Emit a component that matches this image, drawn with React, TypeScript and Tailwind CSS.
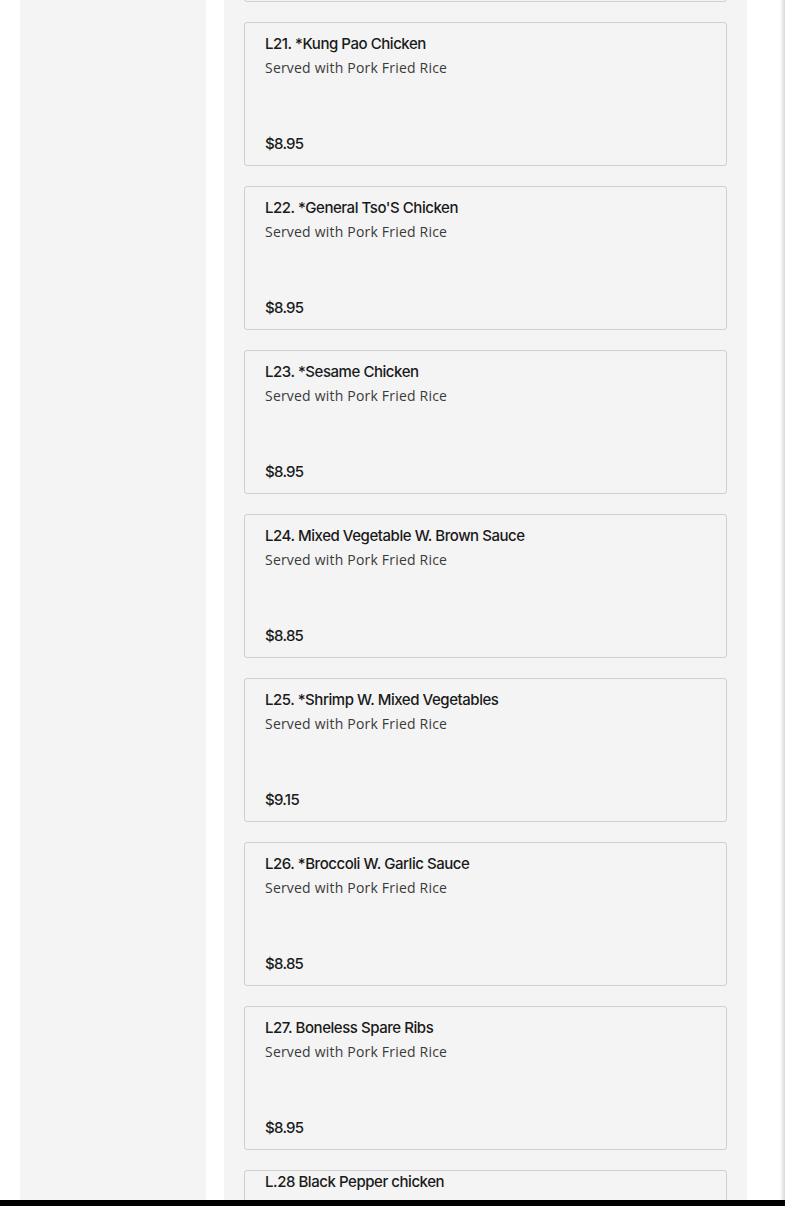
import React from 'react';

type Item = { name: string; price: string };

const items: Item[] = [
    { name: 'L21. *Kung Pao Chicken', price: '$8.95' },
    { name: "L22. *General Tso'S Chicken", price: '$8.95' },
    { name: 'L23. *Sesame Chicken', price: '$8.95' },
    { name: 'L24. Mixed Vegetable W. Brown Sauce', price: '$8.85' },
    { name: 'L25. *Shrimp W. Mixed Vegetables', price: '$9.15' },
    { name: 'L26. *Broccoli W. Garlic Sauce', price: '$8.85' },
    { name: 'L27. Boneless Spare Ribs', price: '$8.95' },
];

const MenuCard: React.FC<{ item: Item }> = ({ item }) => (
    <div className="h-[144px] shrink-0 flex flex-col border border-[#cfcfcf] rounded-[3px] bg-[#f4f4f4] pl-[20px] pt-[10px] pb-[11px]">
        <div className="text-[15px] leading-[21px] font-medium text-[#1a1a1a] tracking-[-0.45px] font-['Inter',sans-serif]">
            {item.name}
        </div>
        <div className="mt-[3px] text-[14px] leading-[21px] text-[#3a3a3a] tracking-[0.2px] font-['Open_Sans',sans-serif]">
            Served with Pork Fried Rice
        </div>
        <div className="mt-auto text-[15px] leading-[20px] font-medium text-[#1a1a1a] tracking-[-0.7px] font-['Inter',sans-serif]">
            {item.price}
        </div>
    </div>
);

const App: React.FC = () => {
    return (
        <div className="h-[1206px] w-[785px] flex flex-col bg-white overflow-hidden">
            <div className="flex-1 flex overflow-hidden">
                {/* Sidebar */}
                <div className="ml-[20px] w-[186px] bg-[#f4f4f4]"></div>

                {/* Menu list */}
                <div className="ml-[18px] w-[523px] bg-[#f4f4f4] px-[20px] overflow-hidden">
                    <div className="-mt-[142px] flex flex-col gap-[20px]">
                        <div className="h-[144px] shrink-0 border border-[#cfcfcf] rounded-[3px]"></div>
                        {items.map((item) => (
                            <MenuCard key={item.name} item={item} />
                        ))}
                        <div className="h-[144px] shrink-0 border border-[#cfcfcf] rounded-[3px] bg-[#f4f4f4] pl-[20px] pt-[1px]">
                            <div className="text-[15px] leading-[20px] font-medium text-[#1a1a1a] tracking-[-0.45px] font-['Inter',sans-serif]">
                                L.28 Black Pepper chicken
                            </div>
                        </div>
                    </div>
                </div>

                <div className="flex-1"></div>
                <div className="w-[5px] bg-gradient-to-r from-white to-[#d8d8d8]"></div>
            </div>
            <div className="h-[6px] bg-black"></div>
        </div>
    );
};

export default App;
